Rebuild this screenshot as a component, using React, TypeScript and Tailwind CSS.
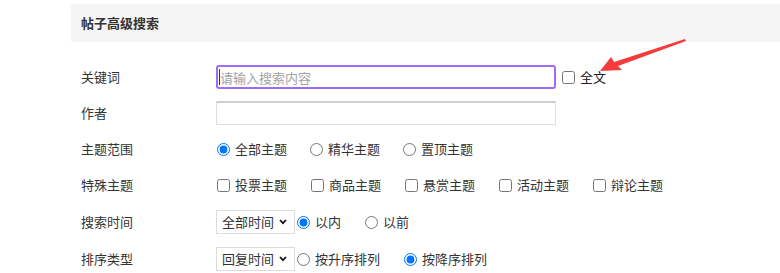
import React from "react";

const font = { fontFamily: '"Noto Sans CJK SC", "Noto Sans", sans-serif' };

function Radio({ label, checked, name }: { label: string; checked?: boolean; name: string }) {
  return (
    <label className="flex items-center">
      <input type="radio" name={name} defaultChecked={checked} className="m-0 w-[13px] h-[13px]" />
      <span className="ml-[5px]">{label}</span>
    </label>
  );
}

function Check({ label }: { label: string }) {
  return (
    <label className="flex items-center">
      <input type="checkbox" className="m-0 w-[13px] h-[13px]" />
      <span className="ml-[5px]">{label}</span>
    </label>
  );
}

function Select({ value }: { value: string }) {
  return (
    <div className="relative w-[79px] h-[24px]">
      <select
        defaultValue={value}
        className="appearance-none w-full h-full border border-[#dcdcdc] bg-white pl-[5px] text-[13px] text-[#333] outline-none"
      >
        <option>{value}</option>
      </select>
      <svg className="absolute right-[8px] top-[9px] pointer-events-none" width="8" height="6" viewBox="0 0 8 6">
        <path d="M1 1 L4 4.2 L7 1" fill="none" stroke="#111" strokeWidth="1.8" />
      </svg>
    </div>
  );
}

export default function App() {
  return (
    <div className="relative w-[780px] h-[273px] overflow-hidden bg-white text-[13px] text-[#333]" style={font}>
      <div className="ml-[71px] mt-[4px] h-[38px] bg-[#f5f5f5] flex items-center pl-[10px] font-bold text-[#333]">
        帖子高级搜索
      </div>

      <div className="ml-[81px] mt-[17px]">
        {/* 关键词 */}
        <div className="flex items-center h-[36px]">
          <div className="w-[135px]">关键词</div>
          <div className="relative">
            <input
              placeholder="请输入搜索内容"
              className="w-[340px] h-[24px] border-2 border-[#9d6df6] rounded-[3px] px-[2px] outline-none placeholder:text-[#a3a3a3]"
            />
            <span className="absolute left-[3px] top-[4px] w-px h-[16px] bg-[#333]" />
          </div>
          <label className="flex items-center ml-[6px]">
            <input type="checkbox" className="m-0 w-[13px] h-[13px]" />
            <span className="ml-[5px] text-[#222]">全文</span>
          </label>
        </div>

        {/* 作者 */}
        <div className="flex items-center h-[36px]">
          <div className="w-[135px]">作者</div>
          <input className="w-[340px] h-[24px] border border-[#dedede] border-t-[#cfcfcf] border-t-2 outline-none" />
        </div>

        {/* 主题范围 */}
        <div className="flex items-center h-[36px]">
          <div className="w-[136px]">主题范围</div>
          <div className="flex items-center gap-[23px]">
            <Radio name="scope" label="全部主题" checked />
            <Radio name="scope" label="精华主题" />
            <Radio name="scope" label="置顶主题" />
          </div>
        </div>

        {/* 特殊主题 */}
        <div className="flex items-center h-[36px]">
          <div className="w-[136px]">特殊主题</div>
          <div className="flex items-center gap-[24px]">
            <Check label="投票主题" />
            <Check label="商品主题" />
            <Check label="悬赏主题" />
            <Check label="活动主题" />
            <Check label="辩论主题" />
          </div>
        </div>

        {/* 搜索时间 */}
        <div className="flex items-center h-[38px]">
          <div className="w-[135px]">搜索时间</div>
          <Select value="全部时间" />
          <div className="flex items-center gap-[24px] ml-[2px]">
            <Radio name="time" label="以内" checked />
            <Radio name="time" label="以前" />
          </div>
        </div>

        {/* 排序类型 */}
        <div className="flex items-center h-[36px]">
          <div className="w-[135px]">排序类型</div>
          <Select value="回复时间" />
          <div className="flex items-center gap-[24px] ml-[2px]">
            <Radio name="order" label="按升序排列" />
            <Radio name="order" label="按降序排列" checked />
          </div>
        </div>
      </div>

      <svg className="absolute left-0 top-0 pointer-events-none" width="780" height="273" viewBox="0 0 780 273">
        <polygon
          points="600,71 611,57 614,62 685,39 686,41 618,66 622,70"
          fill="#f53b3b"
        />
      </svg>
    </div>
  );
}
